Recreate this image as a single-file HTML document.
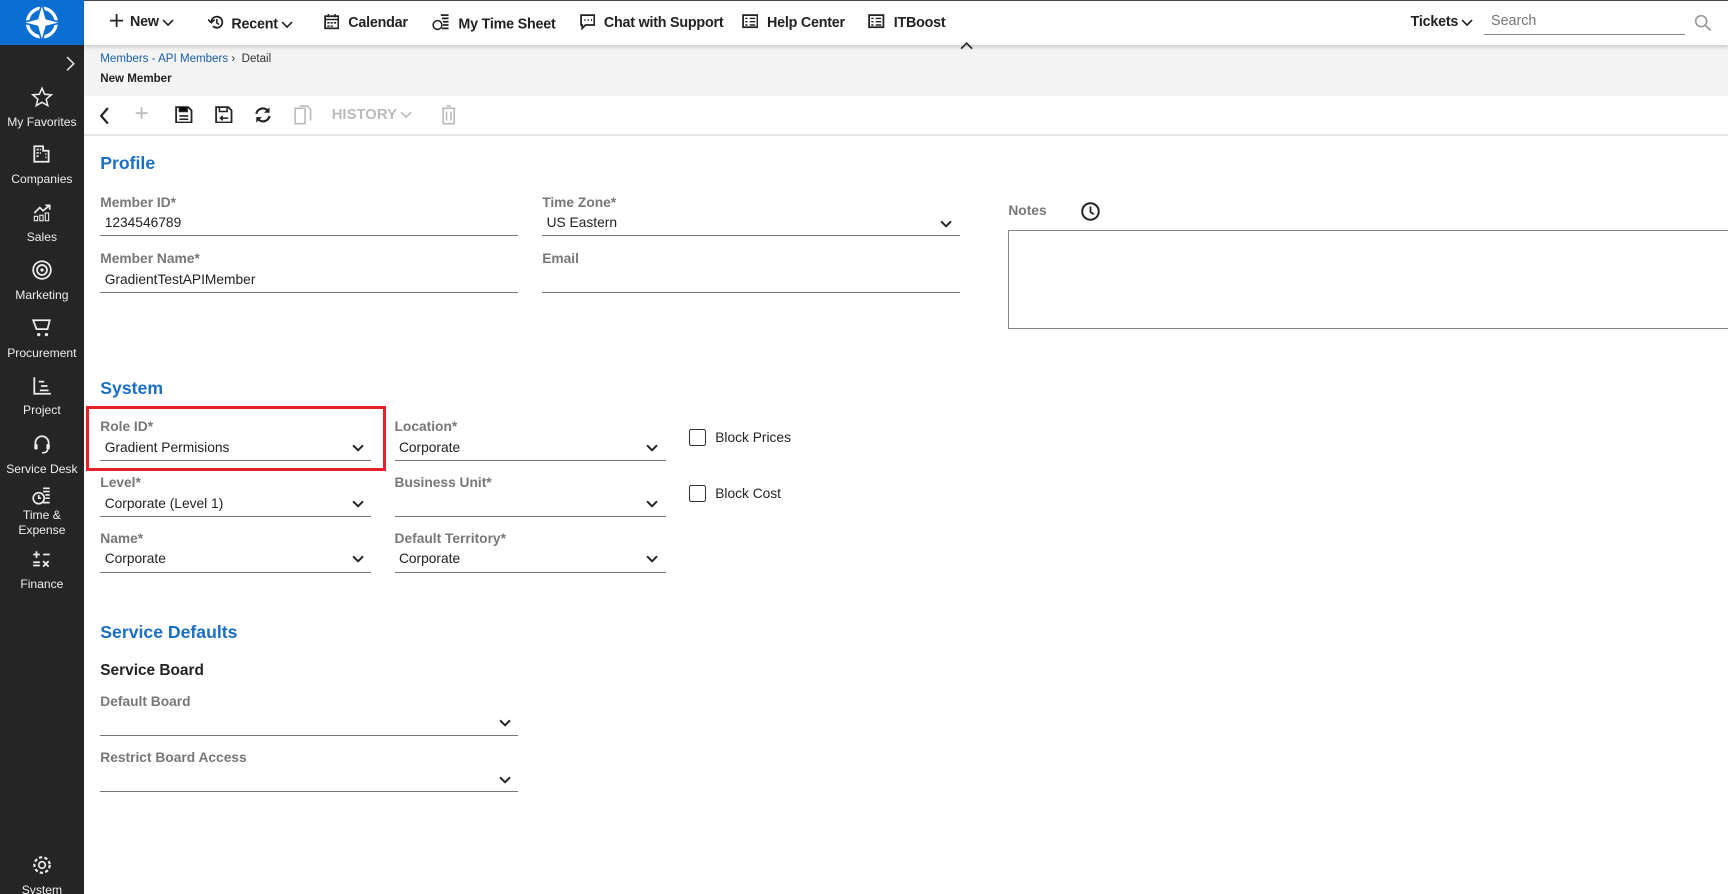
<!DOCTYPE html>
<html><head><meta charset="utf-8"><style>
html,body{margin:0;padding:0;width:1728px;height:894px;overflow:hidden;background:#fff}
#root{zoom:1.10204;width:1568px;height:811px;position:relative;font-family:"Liberation Sans",sans-serif;color:#222;overflow:hidden}
.a{position:absolute}
#side{left:0;top:0;width:76px;height:811px;background:#252525}
#logo{left:0;top:0;width:76px;height:41px;background:#0a6fd1}
#top{left:76px;top:0;width:1492px;height:41px;background:#fff;box-shadow:0 2px 4px rgba(0,0,0,.2);z-index:2;border-top:1px solid #444;box-sizing:border-box}
.nav{top:12px;font-size:13px;font-weight:bold;color:#222;white-space:nowrap;letter-spacing:-0.2px}
.dd{display:inline-block;vertical-align:middle;margin-left:3px}
.si{left:0;width:76px;text-align:center;color:#eee;font-size:11px}
.si svg{display:block;margin:0 auto 6px}
#crumb{left:76px;top:41px;width:1492px;height:46px;background:#f4f4f4}
#tb{left:76px;top:87px;width:1492px;height:35px;border-bottom:2px solid #e6e6e6;background:#fff}
.h{font-size:16px;font-weight:bold;color:#1a6fc4}
.lbl{font-size:12.5px;font-weight:bold;color:#777}
.val{font-size:12.5px;color:#222}
.ln{height:1px;background:#777}
.chev{width:11px;height:11px}
.cb{width:14px;height:14px;border:1.5px solid #333;border-radius:2px}
</style></head><body><div id="root">
<div id="side" class="a"></div>
<div id="logo" class="a"><svg width="76" height="41" viewBox="0 0 76 41"><circle cx="38" cy="20.5" r="13" fill="none" stroke="#fff" stroke-width="3"/><path d="M38 3 L42 17 L56 20.5 L42 24 L38 38 L34 24 L20 20.5 L34 17Z" fill="#fff" stroke="#0a6fd1" stroke-width="1.5"/></svg></div>
<div class="a" style="left:60px;top:50px"><svg width="8" height="14"><path d="M1 1l6 6-6 6" stroke="#ddd" fill="none" stroke-width="1.5"/></svg></div>
<div class="si a" style="top:78px"><svg width="20" height="20" viewBox="0 0 20 20"><path d="M10 2l2.4 5.5 6 .5-4.6 4 1.4 5.8L10 14.8 4.8 17.8l1.4-5.8-4.6-4 6-.5z" fill="none" stroke="#eee" stroke-width="1.4"/></svg>My Favorites</div>
<div class="si a" style="top:130px"><svg width="20" height="20" viewBox="0 0 20 20"><path d="M3 17V3h8v4h5v10z" fill="none" stroke="#eee" stroke-width="1.6"/><path d="M5 6h2M5 9h2M8 6h1M8 9h1M5 12h2M13 10h1M13 13h1" stroke="#eee" stroke-width="1.5"/></svg>Companies</div>
<div class="si a" style="top:183px"><svg width="20" height="20" viewBox="0 0 20 20"><path d="M3 10l5-5 3 3 6-5M13 3h4v4" fill="none" stroke="#eee" stroke-width="1.5"/><rect x="3" y="13" width="3" height="4" fill="none" stroke="#eee"/><rect x="8" y="12" width="3" height="5" fill="none" stroke="#eee"/><rect x="13" y="10" width="3" height="7" fill="none" stroke="#eee"/></svg>Sales</div>
<div class="si a" style="top:235px"><svg width="20" height="20" viewBox="0 0 20 20"><circle cx="10" cy="10" r="8" fill="none" stroke="#eee" stroke-width="1.6"/><circle cx="10" cy="10" r="4.5" fill="none" stroke="#eee" stroke-width="1.6"/><circle cx="10" cy="10" r="1.5" fill="#eee"/></svg>Marketing</div>
<div class="si a" style="top:288px"><svg width="20" height="20" viewBox="0 0 20 20"><path d="M2 3h15l-2 8H5z" fill="none" stroke="#eee" stroke-width="1.6"/><circle cx="7" cy="16" r="1.5" fill="#eee"/><circle cx="14" cy="16" r="1.5" fill="#eee"/></svg>Procurement</div>
<div class="si a" style="top:340px"><svg width="20" height="20" viewBox="0 0 20 20"><path d="M3 2v15h15M7 6h5M9 10h6M8 14h8" fill="none" stroke="#eee" stroke-width="1.6"/></svg>Project</div>
<div class="si a" style="top:393px"><svg width="20" height="20" viewBox="0 0 20 20"><path d="M4 12V9a6 6 0 0 1 12 0v3" fill="none" stroke="#eee" stroke-width="1.6"/><rect x="3" y="10" width="3" height="5" rx="1" fill="#eee"/><rect x="14" y="10" width="3" height="5" rx="1" fill="#eee"/><path d="M15 15q0 3-5 3" fill="none" stroke="#eee" stroke-width="1.4"/></svg>Service Desk</div>
<div class="si a" style="top:440px;line-height:14px"><svg width="20" height="20" viewBox="0 0 20 20" style="margin-bottom:1px"><circle cx="7" cy="12" r="5" fill="none" stroke="#eee" stroke-width="1.5"/><path d="M7 9v3h2M11 3h6M11 6h6M13 9h4M13 12h4M11 16h6" stroke="#eee" stroke-width="1.5" fill="none"/></svg>Time &amp;<br>Expense</div>
<div class="si a" style="top:498px"><svg width="20" height="20" viewBox="0 0 20 20"><path d="M2 5h6M5 2v6M11 5h6M2 12h6M2 15h6M11 11l5 5M16 11l-5 5" stroke="#eee" stroke-width="1.6"/></svg>Finance</div>
<div class="si a" style="top:775px"><svg width="20" height="20" viewBox="0 0 20 20"><circle cx="10" cy="10" r="3" fill="none" stroke="#eee" stroke-width="1.5"/><circle cx="10" cy="10" r="7" fill="none" stroke="#eee" stroke-width="2" stroke-dasharray="3 2"/></svg>System</div>

<div id="top" class="a">
<div class="nav a" style="left:24px"><svg width="12" height="12" style="vertical-align:-1px;margin-right:6px"><path d="M6 0v12M0 6h12" stroke="#222" stroke-width="1.6"/></svg>New<svg class="dd" width="11" height="7"><path d="M1 1l4.5 4.5L10 1" stroke="#222" fill="none" stroke-width="1.5"/></svg></div>
<div class="nav a" style="left:113px"><svg width="15" height="15" style="vertical-align:-2px;margin-right:6px"><path d="M3 7.5a5 5 0 1 1 1.5 3.5" stroke="#222" fill="none" stroke-width="1.6"/><path d="M0 5l3 3 3-3" fill="none" stroke="#222" stroke-width="1.4"/><path d="M8 4.5v3.5l2 1.5" stroke="#222" fill="none" stroke-width="1.4"/></svg>Recent<svg class="dd" width="11" height="7"><path d="M1 1l4.5 4.5L10 1" stroke="#222" fill="none" stroke-width="1.5"/></svg></div>
<div class="nav a" style="left:218px"><svg width="14" height="14" style="vertical-align:-2px;margin-right:8px"><rect x="1" y="2" width="12" height="11" fill="none" stroke="#222" stroke-width="1.6"/><path d="M1 5h12M4 0v3M10 0v3M3 8h2M6 8h2M9 8h2M3 11h2M6 11h2" stroke="#222" stroke-width="1.4"/></svg>Calendar</div>
<div class="nav a" style="left:316px"><svg width="16" height="15" style="vertical-align:-2px;margin-right:8px"><circle cx="5" cy="10" r="4" fill="none" stroke="#222" stroke-width="1.4"/><path d="M8 1h7M9 4h6M10 7h5M10 10h5M9 13h6" stroke="#222" stroke-width="1.6"/></svg>My Time Sheet</div>
<div class="nav a" style="left:450px"><svg width="14" height="14" style="vertical-align:-2px;margin-right:8px"><path d="M1 1h12v9H5l-3 3v-3H1z" fill="none" stroke="#222" stroke-width="1.6"/><path d="M4 5.5h1M7 5.5h1M10 5.5h1" stroke="#222" stroke-width="1.6"/></svg>Chat with Support</div>
<div class="nav a" style="left:597px"><svg width="15" height="13" style="vertical-align:-1px;margin-right:8px"><rect x="1" y="1" width="13" height="11" fill="none" stroke="#222" stroke-width="1.6"/><path d="M3 4h2M7 4h5M3 7h2M7 7h5M3 10h2M7 10h5" stroke="#222" stroke-width="1.3"/></svg>Help Center</div>
<div class="nav a" style="left:712px"><svg width="15" height="13" style="vertical-align:-1px;margin-right:8px"><rect x="1" y="1" width="13" height="11" fill="none" stroke="#222" stroke-width="1.6"/><path d="M3 4h2M7 4h5M3 7h2M7 7h5M3 10h2M7 10h5" stroke="#222" stroke-width="1.3"/></svg>ITBoost</div>
<div class="a" style="left:795px;top:30px"><svg width="12" height="8"><path d="M1 7l5-5 5 5" stroke="#222" fill="none" stroke-width="1.5"/></svg></div>
<div class="nav a" style="left:1204px">Tickets<svg class="dd" width="11" height="7"><path d="M1 1l4.5 4.5L10 1" stroke="#222" fill="none" stroke-width="1.5"/></svg></div>
<div class="a" style="left:1277px;top:11px;font-size:13px;color:#777">Search</div>
<div class="a ln" style="left:1271px;top:30px;width:182px;background:#888"></div>
<div class="a" style="left:1461px;top:12px"><svg width="16" height="16"><circle cx="6.5" cy="6.5" r="5" stroke="#999" fill="none" stroke-width="1.5"/><path d="M10 10l5 5" stroke="#999" stroke-width="1.6"/></svg></div>
</div>

<div id="crumb" class="a">
<div class="a" style="left:15px;top:7px;font-size:10.5px;color:#1a5fa8">Members - API Members <span style="color:#333">›&nbsp; Detail</span></div>
<div class="a" style="left:15px;top:25px;font-size:10.5px;font-weight:bold;color:#222">New Member</div>
</div>
<div id="tb" class="a">
<svg class="a" style="left:14px;top:10px" width="10" height="16"><path d="M8 1L2 8l6 7" stroke="#222" fill="none" stroke-width="2"/></svg>
<div class="a" style="left:46px;top:6px;font-size:22px;color:#bbb;line-height:22px">+</div>
<svg class="a" style="left:83px;top:9px" width="16" height="16"><path d="M1 1h11l3 3v11H1z" fill="none" stroke="#222" stroke-width="1.6"/><path d="M4 1v4h7V1M4 9h8M4 12h8" stroke="#222" stroke-width="1.4"/></svg>
<svg class="a" style="left:119px;top:9px" width="16" height="16"><path d="M1 1h11l3 3v11H1z" fill="none" stroke="#222" stroke-width="1.6"/><path d="M4 1v4h7V1M12 11H5M7 9l-2 2 2 2" stroke="#222" stroke-width="1.4" fill="none"/></svg>
<svg class="a" style="left:154px;top:8px" width="18" height="18"><path d="M3 8a6 6 0 0 1 11-2M15 10a6 6 0 0 1-11 2" stroke="#222" fill="none" stroke-width="2"/><path d="M15 2v5h-5M3 16v-5h5" fill="#222"/></svg>
<svg class="a" style="left:191px;top:8px" width="16" height="18"><path d="M1 3h9v14H1zM5 1h7l3 3v10" fill="none" stroke="#bbb" stroke-width="1.5"/></svg>
<div class="a" style="left:225px;top:10px;font-size:13.5px;font-weight:bold;color:#bbb">HISTORY<svg class="dd" width="11" height="7"><path d="M1 1l4.5 4.5L10 1" stroke="#bbb" fill="none" stroke-width="1.5"/></svg></div>
<svg class="a" style="left:324px;top:8px" width="14" height="18"><path d="M1 3h12M5 1h4M2 3v14h10V3M5 6v8M9 6v8" stroke="#bbb" fill="none" stroke-width="1.5"/></svg>
</div>

<div class="a h" style="left:91px;top:139px">Profile</div>
<div class="a lbl" style="left:91px;top:177px">Member ID*</div>
<div class="a val" style="left:95px;top:195px">1234546789</div>
<div class="a ln" style="left:91px;top:213px;width:379px"></div>
<div class="a lbl" style="left:492px;top:177px">Time Zone*</div>
<div class="a val" style="left:496px;top:195px">US Eastern</div>
<svg class="a chev" style="left:853px;top:198px"><path d="M1 3l4.5 4.5L10 3" stroke="#222" fill="none" stroke-width="1.8"/></svg>
<div class="a ln" style="left:492px;top:213px;width:379px"></div>
<div class="a lbl" style="left:91px;top:228px">Member Name*</div>
<div class="a val" style="left:95px;top:247px">GradientTestAPIMember</div>
<div class="a ln" style="left:91px;top:265px;width:379px"></div>
<div class="a lbl" style="left:492px;top:228px">Email</div>
<div class="a ln" style="left:492px;top:265px;width:379px"></div>
<div class="a lbl" style="left:915px;top:184px">Notes</div>
<svg class="a" style="left:980px;top:182px" width="19" height="19"><circle cx="9.5" cy="9.5" r="7.5" stroke="#222" fill="none" stroke-width="1.8"/><path d="M9.5 5v5l3 2" stroke="#222" fill="none" stroke-width="1.6"/></svg>
<div class="a" style="left:915px;top:209px;width:660px;height:88px;border:1px solid #888"></div>

<div class="a h" style="left:91px;top:343px">System</div>
<div class="a" style="left:78px;top:368px;width:267px;height:54px;border:3px solid #e8202a"></div>
<div class="a lbl" style="left:91px;top:380px">Role ID*</div>
<div class="a val" style="left:95px;top:399px">Gradient Permisions</div>
<svg class="a chev" style="left:319px;top:401px"><path d="M1 3l4.5 4.5L10 3" stroke="#222" fill="none" stroke-width="1.8"/></svg>
<div class="a ln" style="left:91px;top:417px;width:246px"></div>
<div class="a lbl" style="left:358px;top:380px">Location*</div>
<div class="a val" style="left:362px;top:399px">Corporate</div>
<svg class="a chev" style="left:586px;top:401px"><path d="M1 3l4.5 4.5L10 3" stroke="#222" fill="none" stroke-width="1.8"/></svg>
<div class="a ln" style="left:358px;top:417px;width:246px"></div>
<div class="a cb" style="left:625px;top:389px"></div>
<div class="a val" style="left:649px;top:390px">Block Prices</div>

<div class="a lbl" style="left:91px;top:431px">Level*</div>
<div class="a val" style="left:95px;top:450px">Corporate (Level 1)</div>
<svg class="a chev" style="left:319px;top:452px"><path d="M1 3l4.5 4.5L10 3" stroke="#222" fill="none" stroke-width="1.8"/></svg>
<div class="a ln" style="left:91px;top:468px;width:246px"></div>
<div class="a lbl" style="left:358px;top:431px">Business Unit*</div>
<svg class="a chev" style="left:586px;top:452px"><path d="M1 3l4.5 4.5L10 3" stroke="#222" fill="none" stroke-width="1.8"/></svg>
<div class="a ln" style="left:358px;top:468px;width:246px"></div>
<div class="a cb" style="left:625px;top:440px"></div>
<div class="a val" style="left:649px;top:441px">Block Cost</div>

<div class="a lbl" style="left:91px;top:482px">Name*</div>
<div class="a val" style="left:95px;top:500px">Corporate</div>
<svg class="a chev" style="left:319px;top:502px"><path d="M1 3l4.5 4.5L10 3" stroke="#222" fill="none" stroke-width="1.8"/></svg>
<div class="a ln" style="left:91px;top:519px;width:246px"></div>
<div class="a lbl" style="left:358px;top:482px">Default Territory*</div>
<div class="a val" style="left:362px;top:500px">Corporate</div>
<svg class="a chev" style="left:586px;top:502px"><path d="M1 3l4.5 4.5L10 3" stroke="#222" fill="none" stroke-width="1.8"/></svg>
<div class="a ln" style="left:358px;top:519px;width:246px"></div>

<div class="a h" style="left:91px;top:564px">Service Defaults</div>
<div class="a" style="left:91px;top:601px;font-size:14px;font-weight:bold;color:#222">Service Board</div>
<div class="a lbl" style="left:91px;top:630px">Default Board</div>
<svg class="a chev" style="left:453px;top:651px"><path d="M1 3l4.5 4.5L10 3" stroke="#222" fill="none" stroke-width="1.8"/></svg>
<div class="a ln" style="left:91px;top:667px;width:379px"></div>
<div class="a lbl" style="left:91px;top:681px">Restrict Board Access</div>
<svg class="a chev" style="left:453px;top:702px"><path d="M1 3l4.5 4.5L10 3" stroke="#222" fill="none" stroke-width="1.8"/></svg>
<div class="a ln" style="left:91px;top:718px;width:379px"></div>
</div></body></html>
